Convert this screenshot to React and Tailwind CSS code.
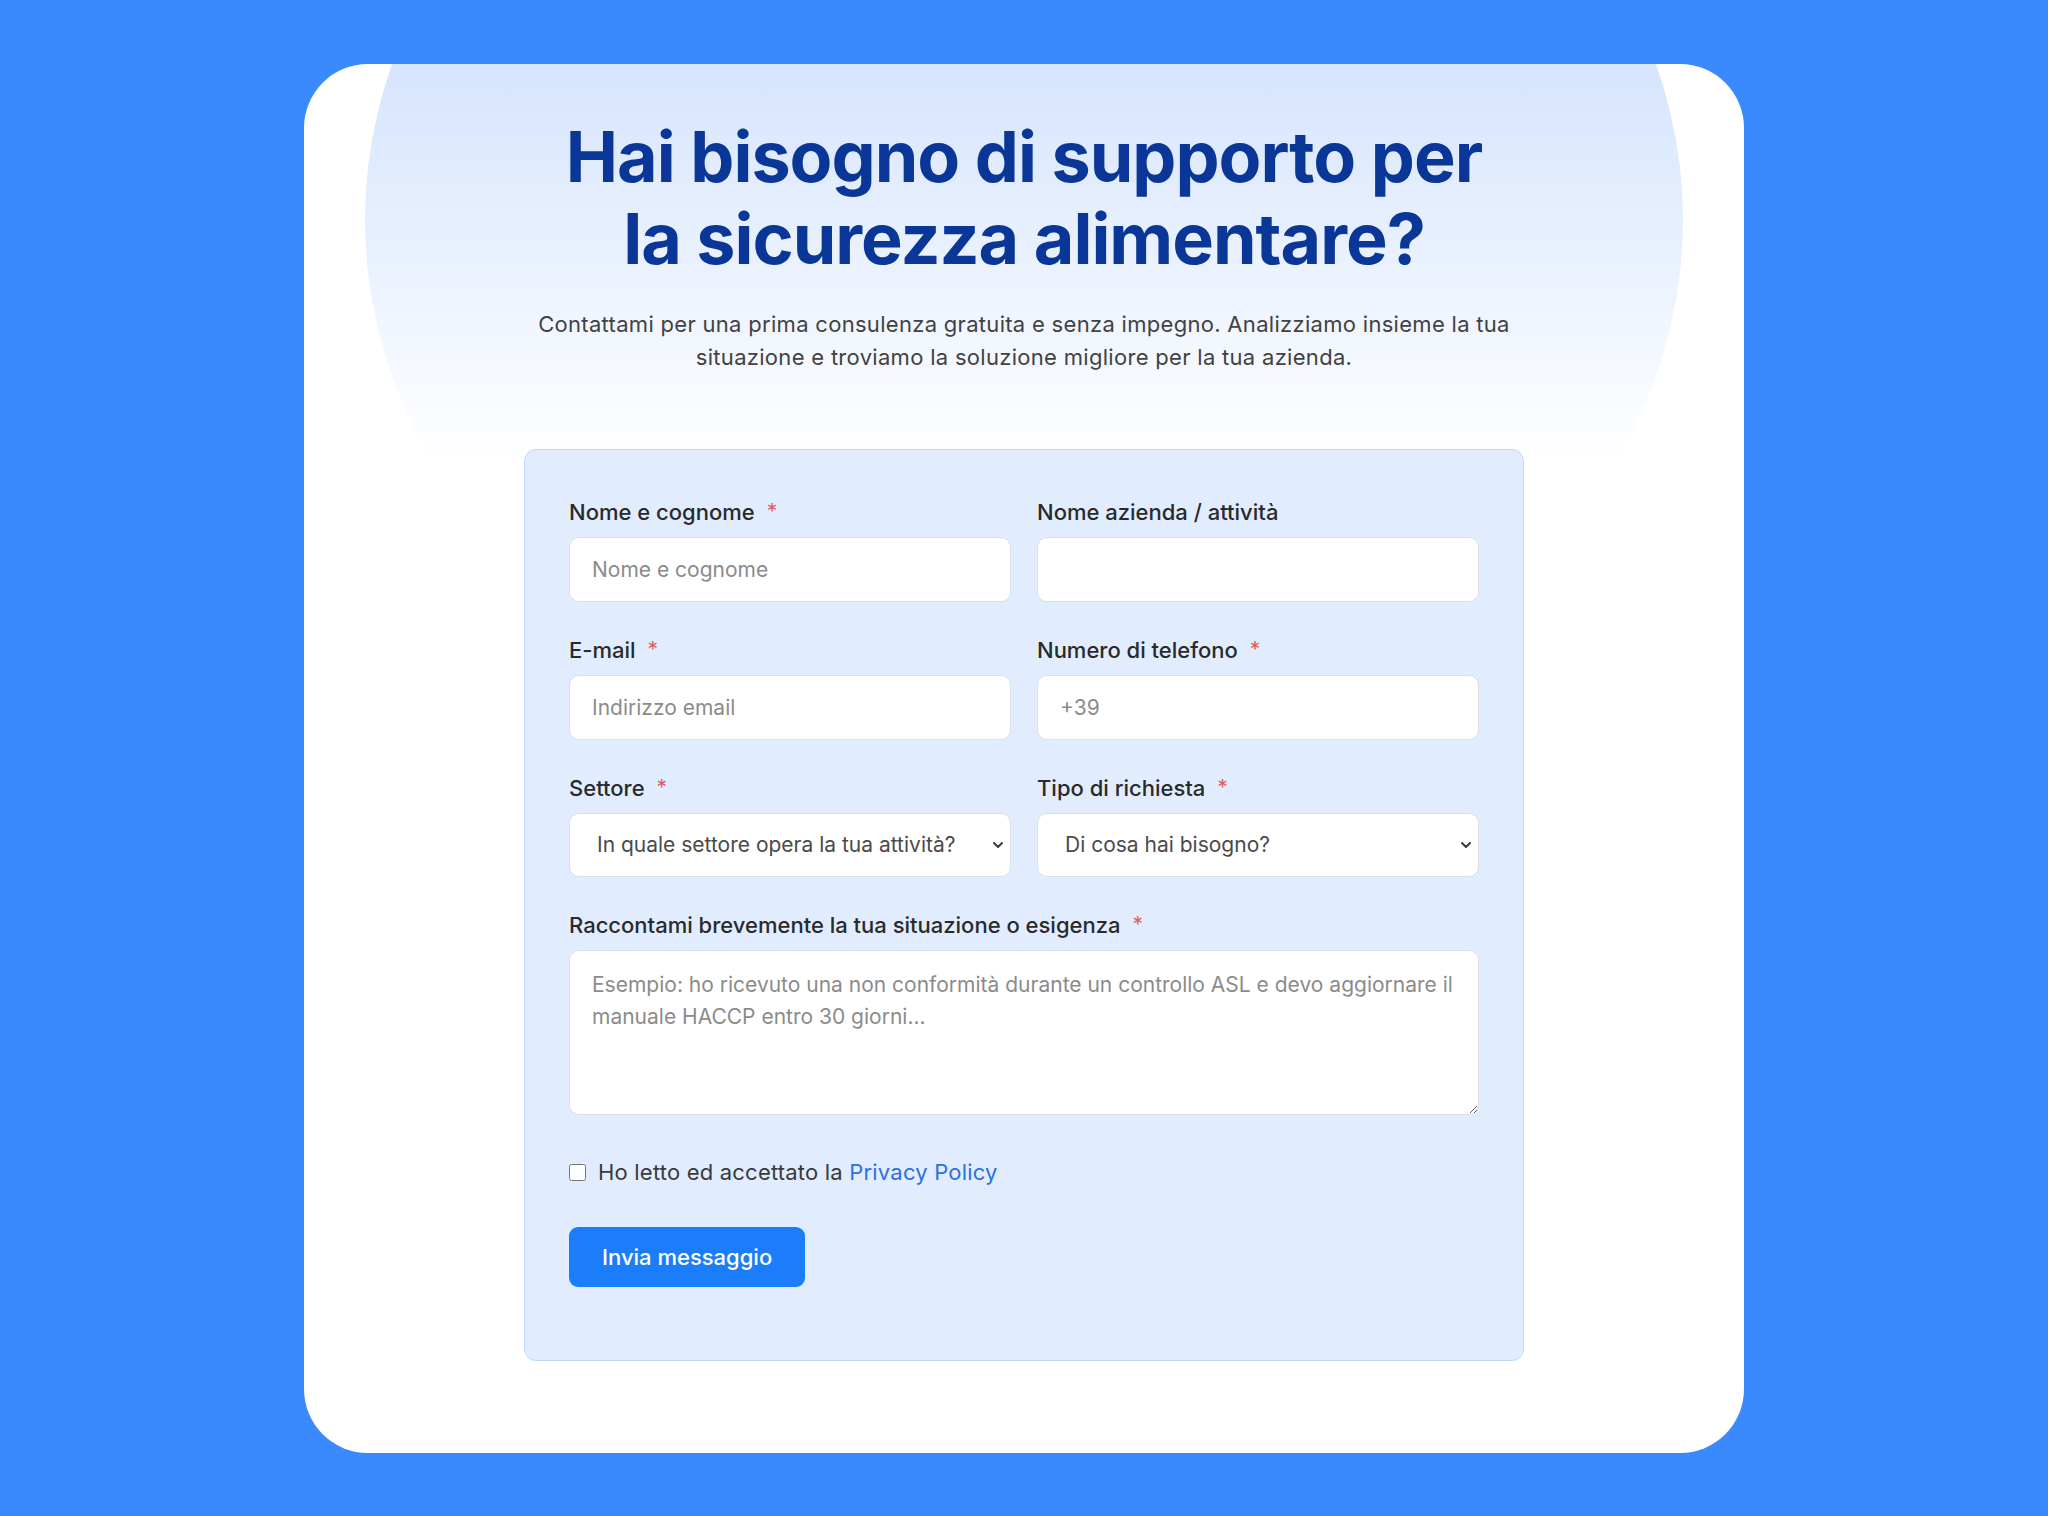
import React from "react";

const font = { fontFamily: "Inter, 'Noto Sans', sans-serif" };

function Label({ children, required }) {
  return (
    <label className="flex items-start text-[22px] leading-[30px] font-medium text-[#2a2a2a] mb-[10px]">
      <span>{children}</span>
      {required && <span className="ml-[12px] text-[21px] leading-[30px] font-normal text-[#e25b5b]">*</span>}
    </label>
  );
}

function TextInput({ placeholder, type = "text" }) {
  return (
    <input
      type={type}
      placeholder={placeholder}
      className="w-full h-[65px] rounded-[10px] border border-[#d9e0e8] bg-white px-[22px] text-[21px] text-[#333] placeholder:text-[#8b8b8b] outline-none"
    />
  );
}

function Select({ children }) {
  return (
    <div className="relative">
      <select
        defaultValue=""
        className="w-full h-[64px] appearance-none rounded-[10px] border border-[#d9e0e8] bg-white pl-[27px] pr-[44px] text-[21px] text-[#4a4a4a] outline-none"
      >
        <option value="" disabled>
          {children}
        </option>
      </select>
      <svg
        className="pointer-events-none absolute right-[7px] top-1/2 -translate-y-1/2"
        width="12"
        height="8"
        viewBox="0 0 12 8"
        fill="none"
      >
        <path d="M2 2l4 4 4-4" stroke="#3a3a3a" strokeWidth="2" strokeLinecap="round" strokeLinejoin="round" />
      </svg>
    </div>
  );
}

export default function App() {
  return (
    <div className="min-h-screen bg-[#3a8afd] pt-[64px] pb-[65px] px-[304px]" style={font}>
      <div className="relative overflow-hidden rounded-[64px] bg-white pt-[52px] pb-[92px]">
        {/* soft blue halo behind the heading */}
        <div className="pointer-events-none absolute left-1/2 -translate-x-1/2 top-[-394px] w-[1318px] h-[1100px] rounded-[50%] bg-linear-to-b from-[#cfe0fc] from-30% to-white to-72%" />

        <div className="relative flex flex-col items-center">
          <h1 className="max-w-[980px] text-center text-[70px] leading-[82px] font-bold tracking-[-1px] text-[#0a3797]">
            Hai bisogno di supporto per la sicurezza alimentare?
          </h1>
          <p className="mt-[28px] max-w-[1010px] text-center text-[22px] leading-[33px] tracking-[0.3px] text-[#424242]">
            Contattami per una prima consulenza gratuita e senza impegno. Analizziamo insieme la tua situazione e troviamo la soluzione migliore per la tua azienda.
          </p>

          <form className="mt-[75px] w-[1000px] rounded-[12px] border border-[#c2d7f6] bg-[#e1edfe] px-[44px] pt-[47px] pb-[73px]">
            <div className="grid grid-cols-2 gap-x-[26px] gap-y-[33px]">
              <div>
                <Label required>Nome e cognome</Label>
                <TextInput placeholder="Nome e cognome" />
              </div>
              <div>
                <Label>Nome azienda / attività</Label>
                <TextInput placeholder="" />
              </div>
              <div>
                <Label required>E-mail</Label>
                <TextInput type="email" placeholder="Indirizzo email" />
              </div>
              <div>
                <Label required>Numero di telefono</Label>
                <TextInput type="tel" placeholder="+39" />
              </div>
              <div>
                <Label required>Settore</Label>
                <Select>In quale settore opera la tua attività?</Select>
              </div>
              <div>
                <Label required>Tipo di richiesta</Label>
                <Select>Di cosa hai bisogno?</Select>
              </div>
              <div className="col-span-2">
                <Label required>Raccontami brevemente la tua situazione o esigenza</Label>
                <textarea
                  placeholder="Esempio: ho ricevuto una non conformità durante un controllo ASL e devo aggiornare il manuale HACCP entro 30 giorni..."
                  className="block w-full h-[165px] rounded-[10px] border border-[#d9e0e8] bg-white px-[22px] pt-[18px] text-[21px] leading-[32px] text-[#333] placeholder:text-[#8b8b8b] outline-none"
                />
              </div>
            </div>

            <label className="mt-[42px] flex items-center gap-[12px] text-[22px] leading-[30px] tracking-[0.2px] text-[#3a3a3a]">
              <input type="checkbox" className="w-[17px] h-[17px] m-0" />
              <span>
                Ho letto ed accettato la <a href="#" className="text-[#2c70e2]">Privacy Policy</a>
              </span>
            </label>

            <button
              type="button"
              className="mt-[40px] h-[60px] rounded-[9px] bg-[#1c7dfb] px-[33px] text-[22px] font-medium text-white"
            >
              Invia messaggio
            </button>
          </form>
        </div>
      </div>
    </div>
  );
}
